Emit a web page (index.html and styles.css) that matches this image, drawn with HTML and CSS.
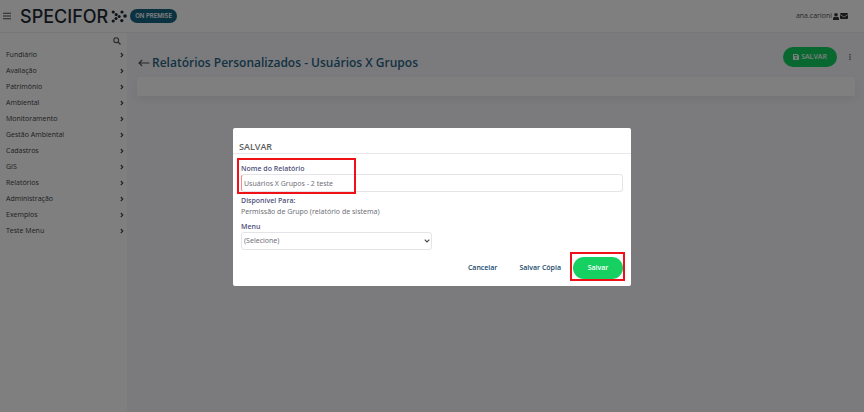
FILE: index.html
```html
<!DOCTYPE html>
<html lang="pt-BR">
<head>
<meta charset="utf-8">
<meta name="viewport" content="width=device-width, initial-scale=1">
<title>Relatórios Personalizados</title>
<link rel="stylesheet" href="styles.css">
</head>
<body>
<svg class="defs" width="0" height="0" aria-hidden="true">
  <symbol id="chevron" viewBox="0 0 4 6"><path d="M.8 1 2.800 3 .8 5" fill="none" stroke="currentColor" stroke-width="1.1"/></symbol>
</svg>
<header class="topbar">
  <button class="icon-button" type="button" aria-label="Menu principal">
    <svg width="8" height="8" viewBox="0 0 8 8"><path d="M0 1.200h8M0 4h8M0 6.800h8" stroke="currentColor" stroke-width="1.1"/></svg>
  </button>
  <a class="brand" href="#"><span>SPECIFOR</span>
    <svg width="16" height="13" viewBox="0 0 16 13" fill="currentColor"><circle cx="2.2" cy="2" r="1.6"/><circle cx="11" cy="2" r="1.6"/><circle cx="5.2" cy="4.6" r="1.6"/><circle cx="8.2" cy="6.4" r="1.5"/><circle cx="14" cy="6" r="1.8"/><circle cx="5" cy="8.4" r="1.5"/><circle cx="2.2" cy="11" r="1.6"/><circle cx="10.8" cy="10.6" r="1.6"/></svg>
  </a>
  <span class="tag">ON PREMISE</span>
  <a class="user" href="#"><span>ana.carioni</span>
    <svg width="6" height="7" viewBox="0 0 6 7" fill="currentColor"><circle cx="3" cy="1.8" r="1.8"/><path d="M0 7V5.800Q0 4 1.600 3.800q1.400.8 2.800 0Q6 4 6 5.800V7z"/></svg>
  </a>
  <button class="icon-button" type="button" aria-label="Mensagens">
    <svg width="8" height="6" viewBox="0 0 8 6"><rect width="8" height="6" rx="1" fill="currentColor"/><path d="m0 1.500 4 2.600 4-2.600" fill="none" stroke="#fff" stroke-width=".7"/></svg>
  </button>
</header>
<div class="layout">
  <nav class="sidebar" aria-label="Principal">
    <button class="icon-button search" type="button" aria-label="Pesquisar">
      <svg width="8" height="8" viewBox="0 0 8 8" fill="none" stroke="currentColor"><circle cx="3.2" cy="3.2" r="2.4" stroke-width="1.1"/><path d="m5 5 2.500 2.500" stroke-width="1.3"/></svg>
    </button>
    <ul>
      <li><a href="#">Fundiário<svg><use href="#chevron"/></svg></a></li>
      <li><a href="#">Avaliação<svg><use href="#chevron"/></svg></a></li>
      <li><a href="#">Patrimônio<svg><use href="#chevron"/></svg></a></li>
      <li><a href="#">Ambiental<svg><use href="#chevron"/></svg></a></li>
      <li><a href="#">Monitoramento<svg><use href="#chevron"/></svg></a></li>
      <li><a href="#">Gestão Ambiental<svg><use href="#chevron"/></svg></a></li>
      <li><a href="#">Cadastros<svg><use href="#chevron"/></svg></a></li>
      <li><a href="#">GIS<svg><use href="#chevron"/></svg></a></li>
      <li><a href="#">Relatórios<svg><use href="#chevron"/></svg></a></li>
      <li><a href="#">Administração<svg><use href="#chevron"/></svg></a></li>
      <li><a href="#">Exemplos<svg><use href="#chevron"/></svg></a></li>
      <li><a href="#">Teste Menu<svg><use href="#chevron"/></svg></a></li>
    </ul>
  </nav>
  <main class="content">
    <div class="page-head">
      <a class="back" href="#" aria-label="Voltar"><svg width="12" height="8" viewBox="0 0 12 8" fill="none" stroke="currentColor" stroke-width="1.1"><path d="M11.500 4H1M4.200 1 1 4l3.200 3"/></svg></a>
      <h1>Relatórios Personalizados - Usuários X Grupos</h1>
      <button class="save" type="button">
        <svg width="6" height="6" viewBox="0 0 6 6"><path fill="currentColor" fill-rule="evenodd" d="M.5 0H4.600L6 1.400V5.500L5.500 6H.5L0 5.500V.5zM1 .9V2.300H4.200V.9zM3 3.200a.9.9 0 1 0 .01 0z"/></svg>
        SALVAR
      </button>
      <button class="icon-button more" type="button" aria-label="Mais opções">
        <svg width="2" height="6" viewBox="0 0 2 6" fill="currentColor"><circle cx="1" cy=".8" r=".8"/><circle cx="1" cy="3" r=".8"/><circle cx="1" cy="5.2" r=".8"/></svg>
      </button>
    </div>
    <div class="panel"></div>
  </main>
</div>
<div class="backdrop">
  <form class="modal" role="dialog" aria-labelledby="modal-title">
    <h2 id="modal-title">SALVAR</h2>
    <div class="fields">
      <div class="name-field">
        <label for="name">Nome do Relatório</label>
        <input id="name" type="text" value="Usuários X Grupos - 2 teste" required>
        <span class="highlight highlight-name"></span>
      </div>
      <div class="access">
        <strong>Disponível Para:</strong>
        <p>Permissão de Grupo (relatório de sistema)</p>
      </div>
      <label for="menu">Menu</label>
      <div class="select">
        <select id="menu"><option>(Selecione)</option></select>
        <svg width="6" height="4" viewBox="0 0 6 4"><path d="m.7.7 2.300 2.200L5.300.7" fill="none" stroke="currentColor" stroke-width="1.1"/></svg>
      </div>
    </div>
    <div class="actions">
      <button type="button">Cancelar</button>
      <button type="button">Salvar Cópia</button>
      <div class="primary-wrap">
        <button class="primary" type="submit">Salvar</button>
        <span class="highlight highlight-save"></span>
      </div>
    </div>
  </form>
</div>
</body>
</html>
```
FILE: styles.css
```css
* { box-sizing: border-box; }
body {
  display: flex;
  flex-direction: column;
  min-height: 100vh;
  margin: 0;
  background: #fff;
  color: #505050;
  font: 7px/10px "Open Sans", sans-serif;
}
h1, h2, p, ul { margin: 0; padding: 0; }
ul { list-style: none; }
a { color: inherit; text-decoration: none; }
button, input, select { font: inherit; color: inherit; }
button { border: 0; padding: 0; background: none; }
svg { display: block; flex: none; }
.defs { position: absolute; }
.icon-button { display: flex; }

.topbar {
  display: flex;
  align-items: center;
  height: 33px;
  padding: 0 16px 0 3px;
  border-bottom: 1px solid #eee;
}
.brand {
  display: flex;
  align-items: center;
  gap: 3px;
  margin-left: 9px;
  color: #1c2830;
  font: 500 18px/20px Inter, sans-serif;
}
.brand span { padding-top: 2px; }
.tag {
  margin-left: 3px;
  padding: 2px 5px;
  border-radius: 7px;
  background: #146482;
  color: #fff;
  font: 600 6px/10px Inter, sans-serif;
}
.user { display: flex; align-items: center; gap: 1px; margin: 0 1px 0 auto; }
.user svg, .user + button { color: #333; }

.layout { display: flex; flex: 1; }
.sidebar { width: 127px; padding: 4px 3px 0 6px; }
.search { margin: 0 3px 2px auto; }
.sidebar a {
  display: flex;
  align-items: center;
  justify-content: space-between;
  height: 16px;
  color: #404040;
}
.sidebar a svg { width: 4px; height: 6px; }
.content { flex: 1; padding: 14px 9px 0 10px; background: #f7f7fb; }
.page-head { display: flex; align-items: center; height: 30px; }
.back { padding-top: 2px; margin: 0 2px 0 1px; }
h1 { padding-top: 2px; color: #2a6484; font-size: 12px; line-height: 16px; font-weight: 600; }
.save {
  display: flex;
  align-items: center;
  justify-content: center;
  gap: 2px;
  width: 54px;
  height: 20px;
  margin: 0 12px 10px auto;
  border-radius: 10px;
  background: #12d060;
  color: #fff;
  font-weight: 600;
}
.more { margin: 0 4px 10px 0; }
.panel { height: 19px; border-radius: 2px; background: #fff; box-shadow: 0 3px 8px #5050701a; }

.backdrop {
  position: fixed;
  inset: 0;
  display: flex;
  align-items: center;
  justify-content: center;
  padding-top: 2px;
  background: rgb(0 0 0 / 50%);
}
.modal {
  width: 398px;
  max-width: 100%;
  padding-bottom: 7px;
  border-radius: 2px;
  background: #fff;
  color: #707078;
}
.modal h2 {
  padding: 12px 6px 0;
  border-bottom: 1px solid #e8e8ec;
  color: #606060;
  font-size: 9px;
  line-height: 13px;
  font-weight: 600;
}
.fields { padding: 10px 8px 0; }
.name-field { position: relative; }
.fields label, .access strong { display: block; color: #50507a; font-weight: 600; }
.fields input, .fields select {
  display: block;
  width: 100%;
  height: 18px;
  padding: 0 2px;
  border: 1px solid #e4e4e8;
  border-radius: 3px;
  background: #fff;
}
.fields input, .fields select, .access p { font-family: "Noto Sans", sans-serif; }
.fields input { border-left-color: #f88; }
.access { margin: 4px 0; }
.access p { line-height: 12px; }
.select { position: relative; width: 50%; }
.select select { appearance: none; }
.select svg { position: absolute; right: 2px; top: 7px; color: #444; }
.actions {
  display: flex;
  justify-content: flex-end;
  align-items: center;
  gap: 22px;
  padding: 7px 8px 0;
  color: #14466a;
  font-weight: 600;
}
.primary-wrap { position: relative; margin-left: -10px; }
.primary { display: block; width: 50px; height: 22px; border-radius: 11px; background: #16d062; color: #fff; }
.highlight { position: absolute; border: 2px solid #f01018; pointer-events: none; }
.highlight-name { top: -6px; left: -4px; width: 119px; height: 36px; }
.highlight-save { inset: -5px -2px -2px -3px; }
```
